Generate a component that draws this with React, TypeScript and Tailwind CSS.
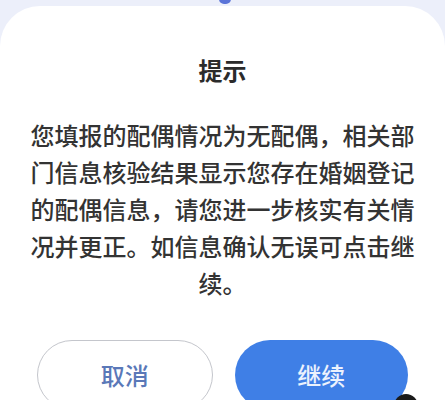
import React from "react";

const App = () => {
    return (
        <div
            className="relative w-[445px] h-[400px] overflow-hidden bg-[#eceffa]"
            style={{ fontFamily: '"Noto Sans CJK SC", "Noto Sans", sans-serif' }}
        >
            {/* top indicator dot */}
            <div className="absolute left-[219px] top-[-6px] w-[12px] h-[10px] rounded-full bg-[#5b74d8]" />

            {/* Dialog card */}
            <div className="mt-[6px] h-[420px] rounded-t-[40px] bg-white flex flex-col items-center">
                <h2 className="pt-[49px] text-[24px] leading-[30px] font-bold text-[#2b2b2b]">提示</h2>

                <p className="mt-[31px] w-[390px] text-center text-[24px] leading-[37px] text-[#333333] font-medium">
                    您填报的配偶情况为无配偶，相关部门信息核验结果显示您存在婚姻登记的配偶信息，请您进一步核实有关情况并更正。如信息确认无误可点击继续。
                </p>

                <div className="mt-[39px] w-full flex gap-[22px] px-[37px]">
                    <button className="flex-1 h-[70px] rounded-full border border-[#c4c6cc] bg-white text-[24px] font-medium text-[#5a78b8]">
                        取消
                    </button>
                    <button className="flex-1 h-[70px] rounded-full bg-[#3f7fe6] text-[24px] font-medium text-white/90">
                        继续
                    </button>
                </div>
            </div>

            {/* dark blob at the corner */}
            <div className="absolute left-[394px] top-[394px] w-[24px] h-[24px] rounded-full bg-[#1a1a1a]" />
        </div>
    );
};

export default App;
